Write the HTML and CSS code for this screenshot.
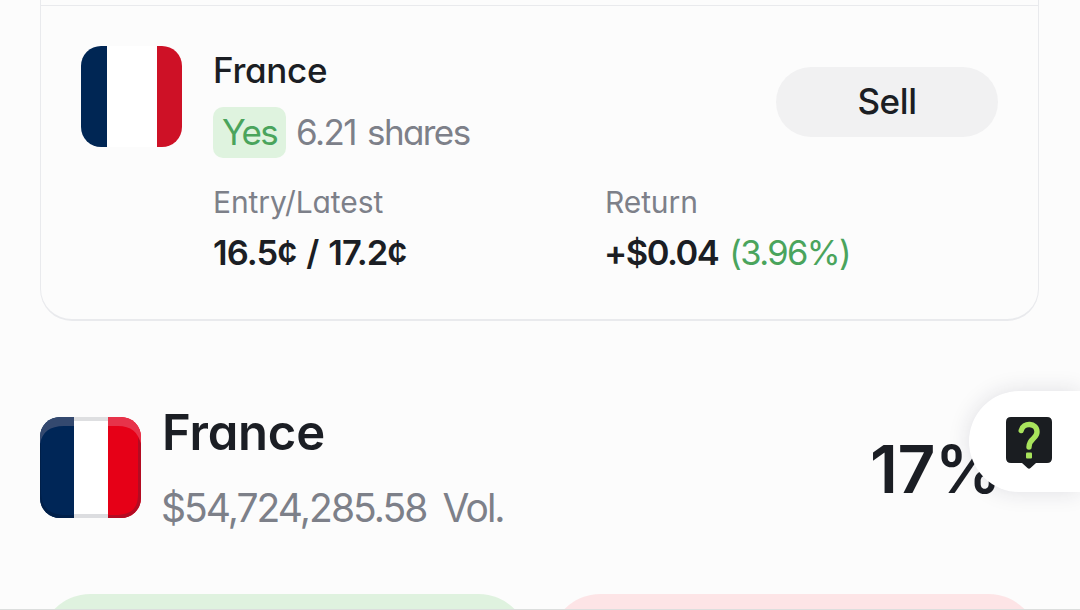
FILE: index.html
```html
<!DOCTYPE html>
<html lang="en">
  <head>
    <meta charset="UTF-8" />
    <meta name="viewport" content="width=device-width, initial-scale=1">
    <title>France</title>
    <link rel="stylesheet" href="styles.css">
  </head>
  <body>
    <main class="page">
      <section class="card">
        <div class="position">
          <svg class="flag" viewBox="0 0 101 101" aria-label="France">
            <rect width="101" height="101" fill="#fff"/>
            <rect width="26" height="101" fill="#002654"/>
            <rect x="76" width="25" height="101" fill="#ce1126"/>
          </svg>
          <div class="details">
            <h3 class="position-name">France</h3>
            <div class="holding">
              <span class="side">Yes</span>
              <span class="shares">6.21 shares</span>
            </div>
          </div>
          <button type="button" class="sell-button">Sell</button>
        </div>
        <div class="stats">
          <div class="stat">
            <p class="label">Entry/Latest</p>
            <p class="value"><span class="price">16.5¢ / 17.2¢</span></p>
          </div>
          <div class="stat">
            <p class="label">Return</p>
            <p class="value"><span class="gain">+$0.04</span><span class="percent">(3.96%)</span></p>
          </div>
        </div>
      </section>

      <section class="market">
        <svg class="flag" viewBox="0 0 101 101" aria-label="France">
          <rect width="101" height="101" fill="#fff"/>
          <rect width="34" height="101" fill="#002657"/>
          <rect x="68" width="33" height="101" fill="#e60017"/>
          <!-- light top rim and darker bottom edge -->
          <path d="M0 0H34V9H24C10 9 2 15 0 27Z" fill="#34496f"/>
          <path d="M34 0H68V4H34Z" fill="#dedfe1"/>
          <path d="M68 0H101V27C98 15 91 9 78 9H68Z" fill="#e7334a"/>
          <path d="M34 97H68V101H34Z" fill="#dcdde0"/>
          <path d="M68 101V98H75C91 98 98 92 98 77V20L101 27V101Z" fill="#b30b22"/>
          <path d="M34 101V98H26C10 98 2 91 1 77V26L0 27V101Z" fill="#001f49"/>
        </svg>
        <div class="market-info">
          <h2 class="market-name">France</h2>
          <p class="volume">$54,724,285.58 Vol.</p>
        </div>
        <strong class="chance">17%</strong>
      </section>

      <div class="actions">
        <div class="action yes"></div>
        <div class="action no"></div>
      </div>
    </main>

    <button type="button" class="help-button" aria-label="Help">
      <svg class="help-icon" viewBox="0 0 46 52">
        <path d="M5 0H41Q46 0 46 5V41Q46 46 41 46H30L24.5 51Q23 52.5 21.5 51L16 46H5Q0 46 0 41V5Q0 0 5 0Z" fill="#1a1d21"/>
        <path d="M15.2 13.5C17 5 31 5.5 31 15C31 22 23 21 23 30" fill="none" stroke="#a8e35c" stroke-width="5.4" stroke-linecap="round"/>
        <rect x="20" y="35.5" width="6" height="6" rx="1" fill="#a8e35c"/>
      </svg>
    </button>
  </body>
</html>
```

FILE: styles.css
```css
* {
  box-sizing: border-box;
}
body {
  margin: 0;
  font-family: Inter, "Liberation Sans", sans-serif;
  font-feature-settings: "cv11", "calt" 0;
  background-color: #fcfcfc;
  color: #1b1e24;
  overflow: hidden;
}
h2, h3, p {
  margin: 0;
}
button {
  border: none;
  font: inherit;
  color: inherit;
}
span, h2, h3, p, strong {
  white-space: nowrap;
}
.page {
  height: 610px;
  padding: 0 41px 0 40px;
  overflow: hidden;
  border-bottom: 1px solid #dcdedd;
}
.card {
  height: 321px;
  border: 1px solid #e9eaed;
  border-top: none;
  border-bottom-width: 2px;
  border-radius: 0 0 32px 32px;
  padding-top: 5px;
}
.position {
  display: flex;
  align-items: flex-start;
  height: 174px;
  border-top: 1px solid #e9eaed;
  padding: 40px 40px 0;
}
.flag {
  flex: none;
  width: 101px;
  height: 101px;
  border-radius: 20px;
}
.details {
  flex: 1;
  margin-left: 31px;
  padding-top: 2px;
}
.position-name {
  font-size: 35px;
  line-height: 44px;
  font-weight: 500;
  letter-spacing: -0.3px;
}
.holding {
  display: flex;
  align-items: flex-start;
  gap: 10px;
  margin-top: 15px;
  font-size: 35px;
  line-height: 50px;
  letter-spacing: -1.6px;
}
.side {
  width: 73px;
  height: 51px;
  text-align: center;
  border-radius: 10px;
  background: #dff3df;
  color: #4aa45c;
}
.shares {
  word-spacing: 3px;
  color: #7d8089;
}
.sell-button {
  width: 222px;
  height: 70px;
  margin-top: 21px;
  padding-bottom: 3px;
  border-radius: 35px;
  background: #f1f1f2;
  font-size: 35px;
  font-weight: 500;
  letter-spacing: -0.4px;
}
.stats {
  display: grid;
  grid-template-columns: 392px 1fr;
  padding: 5px 0 0 172px;
}
.label {
  font-size: 30px;
  line-height: 37px;
  letter-spacing: -0.1px;
  color: #7d8089;
}
.value {
  display: flex;
  gap: 11px;
  margin-top: 9px;
  font-size: 34.5px;
  line-height: 46px;
  font-weight: 600;
}
.price {
  letter-spacing: -0.9px;
  word-spacing: 2px;
}
.gain {
  margin-left: -1px;
  letter-spacing: -1.5px;
}
.percent {
  font-weight: 400;
  letter-spacing: -1.6px;
  color: #4aa45c;
}
.market {
  display: flex;
  align-items: flex-start;
  margin-top: 96px;
  height: 177px;
}
.market-info {
  flex: 1;
  margin-left: 21px;
}
.market-name {
  margin-top: -14px;
  font-size: 49px;
  line-height: 60px;
  font-weight: 600;
  letter-spacing: -0.2px;
}
.volume {
  margin-top: 19px;
  margin-left: -1px;
  font-size: 39px;
  line-height: 52px;
  letter-spacing: -1.95px;
  word-spacing: 7px;
  color: #7d8089;
}
.chance {
  width: 169px;
  margin-top: 12px;
  font-size: 66px;
  line-height: 80px;
  font-weight: 600;
  letter-spacing: -0.5px;
}
.actions {
  display: grid;
  grid-template-columns: 489px 489px;
  gap: 21px;
}
.action {
  height: 101px;
  border-radius: 51px;
}
.yes {
  background: #dff2df;
}
.no {
  background: #fde4e6;
}
/* floats over the page, cut off by the right edge */
.help-button {
  position: fixed;
  top: 391px;
  right: 0;
  width: 111px;
  height: 101px;
  padding: 3px 0 0 37px;
  border-radius: 51px 0 0 51px;
  background: #fff;
  box-shadow: 0 0 22px rgba(30, 32, 60, 0.13);
}
.help-icon {
  display: block;
  width: 46px;
  height: 52px;
}
```
